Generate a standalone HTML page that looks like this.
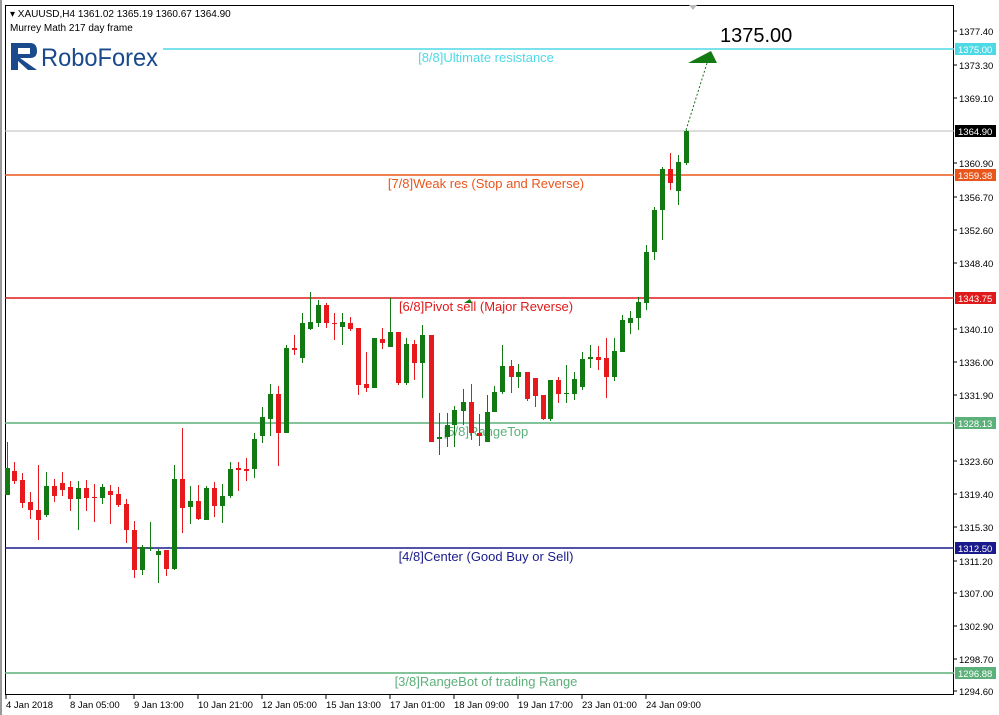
<!DOCTYPE html>
<html><head><meta charset="utf-8"><style>
html,body{margin:0;padding:0;background:#fff;width:999px;height:715px;overflow:hidden;font-family:"Liberation Sans",sans-serif}
svg{display:block}
</style></head><body>
<svg id="s" width="999" height="715" xmlns="http://www.w3.org/2000/svg" font-family="Liberation Sans, sans-serif">
<rect x="0" y="0" width="999" height="715" fill="#fff"/>
<rect x="5.5" y="5.5" width="948" height="689" fill="none" stroke="#000" stroke-width="1"/>
<line x1="1" y1="0" x2="1" y2="715" stroke="#999" stroke-width="2"/>
<polygon points="689,5 697,5 693,10" fill="#bbb"/>
<text x="10" y="17" font-size="10">▾ XAUUSD,H4  1361.02 1365.19 1360.67 1364.90</text>
<text x="10" y="31" font-size="10">Murrey Math 217 day frame</text>
<g>
<rect x="11" y="43" width="7" height="27" fill="#1a4a8c"/>
<path d="M11 43 H30 Q37 43 37 51 Q37 58 30 58 H20 L37 70 H28 L18 61" fill="#1a4a8c"/>
<rect x="18" y="48" width="12" height="6" fill="#fff"/>
<text x="41" y="66" font-size="25" fill="#1a4a8c" textLength="117" lengthAdjust="spacingAndGlyphs">RoboForex</text>
</g>
<g id="lv"></g>
<g id="cd"></g>
<line x1="686" y1="130" x2="708" y2="60" stroke="#1a6b1a" stroke-dasharray="2,2"/>
<polygon points="688,63 717,63 711,51" fill="#137a13"/>
<polygon points="464,303 472,303 470,299" fill="#137a13"/>
<text x="720" y="42" font-size="20" fill="#000">1375.00</text>
<g id="ax" font-size="9.5" fill="#000"></g>
</svg>
<script>
var NS="http://www.w3.org/2000/svg";
function el(p,t,a,txt){var e=document.createElementNS(NS,t);for(var k in a)e.setAttribute(k,a[k]);if(txt)e.textContent=txt;document.getElementById(p).appendChild(e);return e;}
var lv=[[49,"#4dd9e6","[8/8]Ultimate resistance","1375.00",1.5],
[131,"#bbb","","1364.90",1],
[175,"#e8561c","[7/8]Weak res (Stop and Reverse)","1359.38",1.5],
[298,"#e01a1a","[6/8]Pivot sell (Major Reverse)","1343.75",1.5],
[423,"#5cb07a","[5/8]RangeTop","1328.13",1.5],
[548,"#1a1a8c","[4/8]Center (Good Buy or Sell)","1312.50",1.5],
[673,"#5cb07a","[3/8]RangeBot of trading Range","1296.88",1.5]];
lv.forEach(function(l,i){
 var x1=i==0?163:5;
 el("lv","line",{x1:x1,y1:l[0],x2:954,y2:l[0],stroke:l[1],"stroke-width":l[4]});
 if(l[2])el("lv","text",{x:486,y:l[0]+13,"font-size":13,fill:l[1],"text-anchor":"middle"},l[2]);
 var bg=i==1?"#000":l[1];
 el("ax","rect",{x:955,y:l[0]-6,width:41,height:12,fill:bg});
 el("ax","text",{x:958,y:l[0]+4,fill:"#fff"},l[3]);
});
var ticks=[[31,"1377.40"],[65,"1373.30"],[98,"1369.10"],[163,"1360.90"],[197,"1356.70"],[230,"1352.60"],[263,"1348.40"],[329,"1340.10"],[362,"1336.00"],[395,"1331.90"],[461,"1323.60"],[494,"1319.40"],[527,"1315.30"],[561,"1311.20"],[593,"1307.00"],[626,"1302.90"],[659,"1298.70"],[691,"1294.60"]];
ticks.forEach(function(t){el("ax","line",{x1:954,y1:t[0],x2:957,y2:t[0],stroke:"#000"});el("ax","text",{x:959,y:t[0]+4},t[1]);});
var dates=[[5,"4 Jan 2018"],[69,"8 Jan 05:00"],[133,"9 Jan 13:00"],[197,"10 Jan 21:00"],[261,"12 Jan 05:00"],[325,"15 Jan 13:00"],[389,"17 Jan 01:00"],[453,"18 Jan 09:00"],[517,"19 Jan 17:00"],[581,"23 Jan 01:00"],[645,"24 Jan 09:00"]];
dates.forEach(function(d){el("ax","line",{x1:d[0]+1,y1:694,x2:d[0]+1,y2:699,stroke:"#000"});el("ax","text",{x:d[0]+1,y:708},d[1]);});
var c=[[7,"G",468,495,442,495],[14,"R",471,481,462,484],[22,"R",480,503,473,508],[30,"R",502,510,492,519],[38,"R",510,520,465,540],[46,"G",486,515,472,517],[54,"R",486,496,479,502],[62,"R",483,490,472,496],[70,"R",487,499,481,511],[78,"G",488,499,481,530],[86,"R",488,498,480,511],[94,"R",497,498,484,522],[102,"G",487,498,484,504],[110,"R",491,495,485,524],[118,"R",494,505,487,507],[126,"R",504,530,499,543],[134,"R",530,570,521,578],[142,"G",547,570,545,575],[150,"G",548,549,522,551],[158,"G",551,555,549,583],[166,"R",550,569,550,576],[174,"G",479,569,465,570],[182,"R",479,508,428,533],[190,"G",501,507,486,524],[198,"R",501,519,485,520],[206,"G",488,520,486,520],[214,"R",488,506,482,517],[222,"G",496,506,484,523],[230,"G",469,496,462,498],[238,"R",468,470,462,491],[246,"R",469,471,458,481],[254,"G",439,469,433,478],[262,"G",417,436,407,443],[270,"G",394,419,384,436],[278,"R",394,433,386,466],[286,"G",348,433,345,433],[294,"R",348,350,335,355],[302,"G",323,358,313,363],[310,"G",322,329,292,330],[318,"G",305,323,300,327],[326,"R",305,323,303,328],[334,"R",323,324,313,340],[342,"G",322,327,313,345],[350,"R",323,329,317,331],[358,"R",328,385,328,395],[366,"R",384,388,352,392],[374,"G",338,388,338,388],[382,"R",339,343,328,349],[390,"G",332,347,298,347],[398,"R",332,383,332,385],[406,"G",344,383,338,385],[414,"R",344,363,340,380],[422,"G",335,363,325,398],[431,"R",335,442,335,442],[439,"G",437,439,413,455],[447,"G",425,437,413,447],[454,"G",410,425,406,447],[463,"G",402,411,389,425],[471,"R",402,433,384,440],[479,"R",433,436,414,446],[487,"G",412,442,395,442],[494,"G",392,412,386,400],[502,"G",366,392,345,394],[511,"R",366,377,360,393],[518,"G",372,377,364,388],[527,"R",372,399,372,401],[535,"R",378,396,378,407],[543,"R",395,419,395,420],[550,"G",380,419,380,421],[558,"R",380,394,377,403],[566,"G",393,394,365,403],[574,"G",379,394,372,400],[582,"G",359,387,352,390],[590,"G",357,359,345,368],[598,"R",357,360,346,370],[606,"R",358,377,338,398],[614,"G",351,377,338,381],[622,"G",320,352,315,352],[630,"G",318,323,311,334],[638,"G",302,318,297,330],[646,"G",252,303,245,310],[654,"G",210,252,207,260],[662,"G",169,210,167,240],[670,"R",169,183,153,190],[678,"G",162,191,155,205],[686,"G",131,163,130,165]];
c.forEach(function(k){var col=k[1]=="G"?"#137a13":"#e8191c";
 el("cd","line",{x1:k[0]+.5,y1:k[4],x2:k[0]+.5,y2:k[5],stroke:col});
 el("cd","rect",{x:k[0]-2,y:k[2],width:5,height:Math.max(1,k[3]-k[2]),fill:col});});
</script>
</body></html>
